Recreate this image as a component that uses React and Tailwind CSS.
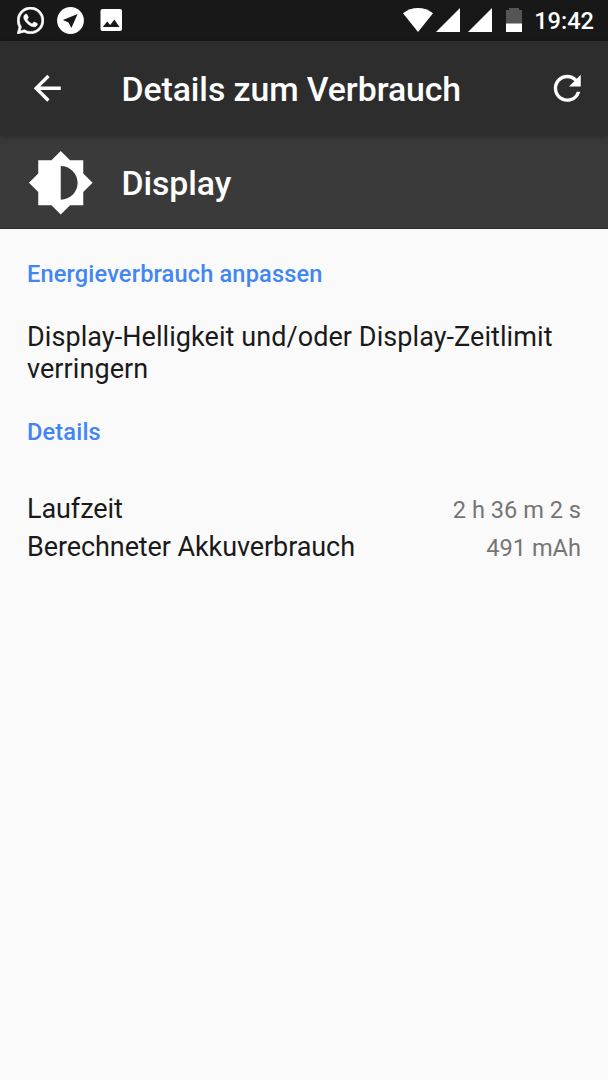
import React from 'react'
import { SiWhatsapp } from 'react-icons/si'
import { MdArrowBack, MdRefresh } from 'react-icons/md'

const details = [
  { label: 'Laufzeit', value: '2 h 36 m 2 s' },
  { label: 'Berechneter Akkuverbrauch', value: '491 mAh' },
]

function SignalIcon({ className }) {
  return (
    <svg className={className} width="24" height="24" viewBox="0 0 24 24" fill="currentColor">
      <path d="M24 0v24H0z" />
    </svg>
  )
}

function StatusBar() {
  return (
    <div className="flex h-[41px] w-full items-center bg-[#181818] pb-px pl-[17px] pr-[14px] text-white">
      <SiWhatsapp className="size-[27px] stroke-white stroke-[0.5px]" />
      <svg className="ml-[13px]" width="27" height="27" viewBox="0 0 27 27">
        <circle cx="13.5" cy="13.5" r="13.4" fill="#fff" />
        <path d="M20.6 6.9L5.9 13l5.6 2.5 2.9 5.6z" fill="#181818" />
      </svg>
      <svg className="ml-4" width="22" height="22" viewBox="0 0 22 22">
        <rect x="0.5" width="21.5" height="22" rx="2" fill="#fff" />
        <path d="M2.8 18l4.4-5.6 3 3.6 4.2-5.4L19.4 18z" fill="#181818" />
      </svg>

      <svg className="ml-auto" width="30" height="24" viewBox="0 0 30 24" fill="currentColor">
        <path d="M15 24L0 5.2C4.4 1.8 9.5 0 15 0s10.6 1.8 15 5.2z" />
      </svg>
      <SignalIcon className="ml-[3px]" />
      <SignalIcon className="ml-[8px]" />
      <svg className="ml-[14px]" width="16" height="24" viewBox="0 0 16 24">
        <path d="M0 2h3V0h10v2h3v14H0z" fill="#555" />
        <path d="M0 15.5h16V24H0z" fill="#fff" />
      </svg>
      <span className="ml-[12px] pt-1 text-[23.6px] font-medium leading-none">19:42</span>
    </div>
  )
}

function App() {
  return (
    <div className="flex min-h-[1080px] w-[608px] flex-col bg-[#fafafa] font-['Roboto',sans-serif] text-[#1a1a1a]">
      <StatusBar />

      <header className="relative flex h-[95px] items-center bg-[#2d2d2d] px-[27px] pb-px text-white shadow-[0_2px_6px_rgba(0,0,0,0.25)]">
        <MdArrowBack className="size-[40.5px]" />
        <h1 className="ml-[54px] pt-1 text-[33.8px] font-medium leading-10 tracking-[-0.08px]">Details zum Verbrauch</h1>
        <MdRefresh className="-mr-[6px] ml-auto size-[40.5px]" />
      </header>

      <div className="flex h-[93px] items-center border-b border-[#2d2d2d] bg-[#3a3a3a] px-[27px] text-white">
        <svg className="mt-px" width="67.5" height="67.5" viewBox="0 0 24 24" fill="currentColor">
          <path d="M20 15.31L23.31 12 20 8.69V4h-4.69L12 .69 8.69 4H4v4.69L.69 12 4 15.31V20h4.69L12 23.31 15.31 20H20v-4.69zM12 18V6c3.31 0 6 2.69 6 6s-2.69 6-6 6z" />
        </svg>
        <h2 className="ml-[27px] pt-1 text-[33.8px] font-medium leading-10 tracking-[-0.08px]">Display</h2>
      </div>

      <main className="flex flex-col px-[27px] pt-[31px]">
        <h3 className="text-[23.6px] font-medium leading-7 tracking-[0.15px] text-[#4285f4]">Energieverbrauch anpassen</h3>
        <p className="mt-[33px] text-[27px] leading-8 tracking-[0.07px]">
          Display-Helligkeit und/oder Display-Zeitlimit verringern
        </p>
        <h3 className="mt-[33px] text-[23.6px] font-medium leading-7 tracking-[0.15px] text-[#4285f4]">Details</h3>

        <ul className="mt-[44px]">
          {details.map(item => (
            <li key={item.label} className="flex h-[38px] items-center justify-between">
              <span className="text-[27px] leading-8 tracking-[-0.09px]">{item.label}</span>
              <span className="pt-0.5 text-[23.6px] leading-8 text-[#757575]">{item.value}</span>
            </li>
          ))}
        </ul>
      </main>
    </div>
  )
}

export default App
